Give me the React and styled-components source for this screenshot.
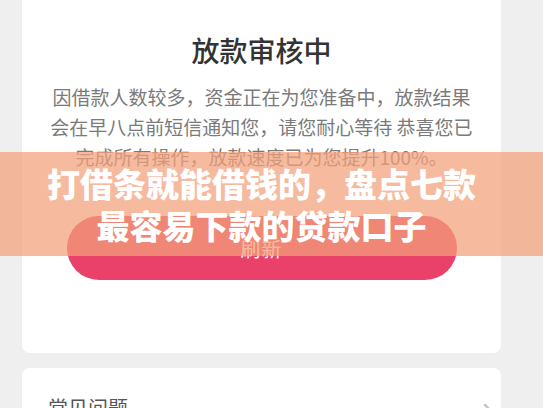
import React from 'react';
import styled, { createGlobalStyle } from 'styled-components';

const GlobalStyle = createGlobalStyle`
  html, body {
    margin: 0;
    padding: 0;
    background: #efefef;
    overflow: hidden;
  }
  body {
    font-family: "Noto Sans CJK SC", "Noto Sans", sans-serif;
  }
`;

const Page = styled.div`
  position: relative;
  width: 543px;
  height: 408px;
  overflow: hidden;
  padding: 0 42px 0 22px;
  box-sizing: border-box;
`;

const Card = styled.div`
  background: #fff;
  border-radius: 8px;
  margin-top: ${(p) => p.$top || 0}px;
  padding: ${(p) => p.$pad};
  display: flex;
  flex-direction: column;
  align-items: center;
`;

const Illustration = styled.svg`
  display: block;
  margin-left: 88px;
`;

const Title = styled.h1`
  margin: 30px 0 0;
  font-size: 28px;
  line-height: 40px;
  font-weight: 500;
  color: #333;
`;

const Message = styled.p`
  margin: 12px 0 0;
  font-size: 19px;
  line-height: 30px;
  color: #7a7a7a;
  text-align: center;
  white-space: nowrap;
`;

const RefreshButton = styled.button`
  margin-top: 44px;
  width: 390px;
  height: 64px;
  border: none;
  border-radius: 32px;
  background: #e9416a;
  color: #fff;
  font-family: inherit;
  font-size: 20px;
  letter-spacing: 1px;
`;

const FaqRow = styled.div`
  align-self: stretch;
  display: flex;
  justify-content: space-between;
  align-items: flex-start;
  padding: 0 4px 0 26px;
  font-size: 20px;
  line-height: 30px;
  color: #555;
`;

const Banner = styled.div`
  position: absolute;
  left: 0;
  right: 0;
  top: 152px;
  height: 104px;
  box-sizing: border-box;
  padding: 10px 20px 0 0;
  background: rgba(242, 160, 122, 0.73);
  color: #fff;
  text-align: center;
  font-size: 33px;
  line-height: 42px;
  font-weight: 900;
  white-space: nowrap;
`;

const Chevron = () => (
  <svg width="14" height="24" viewBox="0 0 14 24" style={{ marginTop: 10 }}>
    <polyline points="2,2 12,12 2,22" fill="none" stroke="#c8c8c8" strokeWidth="2.5" strokeLinecap="round" />
  </svg>
);

export default function App() {
  return (
    <>
      <GlobalStyle />
      <Page>
        <Card $top={-60} $pad="0 0 73px">
          <Illustration width="60" height="60" viewBox="0 0 60 60">
            <ellipse cx="30" cy="40" rx="24" ry="21" fill="#fbf6e4" />
          </Illustration>
          <Title>放款审核中</Title>
          <Message>
            因借款人数较多，资金正在为您准备中，放款结果
            <br />
            会在早八点前短信通知您，请您耐心等待 恭喜您已
            <br />
            完成所有操作，放款速度已为您提升100%。
          </Message>
          <RefreshButton>刷新</RefreshButton>
        </Card>
        <Card $top={15} $pad="25px 0 40px">
          <FaqRow>
            <span>常见问题</span>
            <Chevron />
          </FaqRow>
        </Card>
        <Banner>
          打借条就能借钱的，盘点七款
          <br />
          最容易下款的贷款口子
        </Banner>
      </Page>
    </>
  );
}
